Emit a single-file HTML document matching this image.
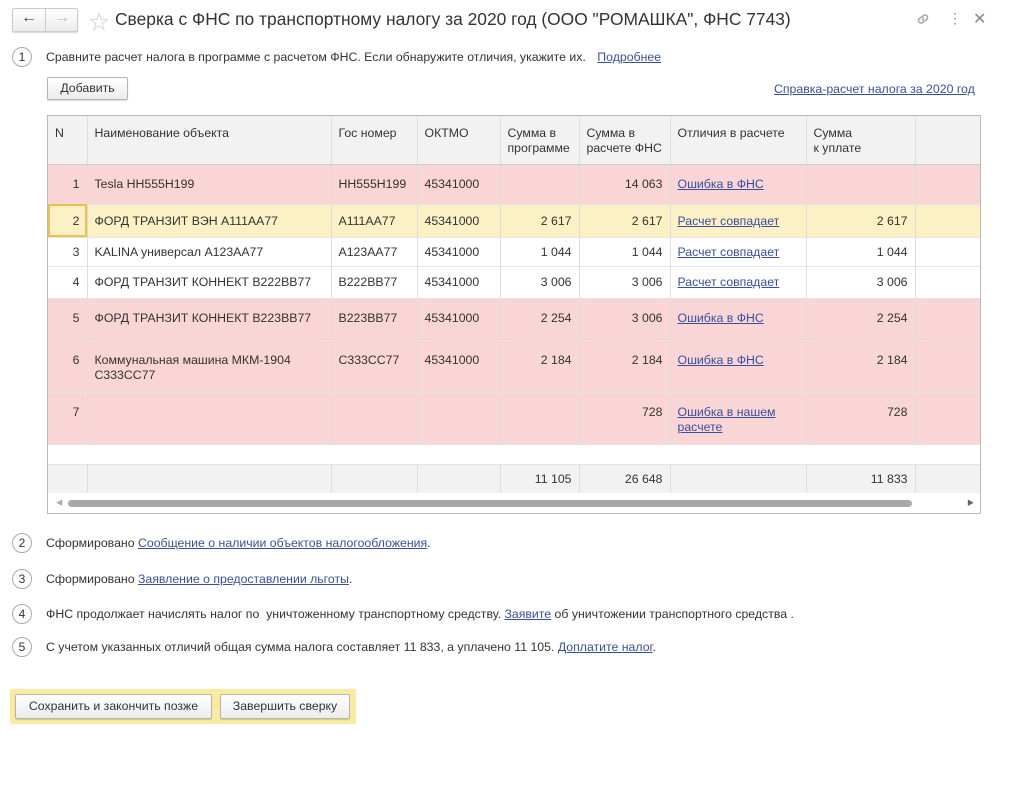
<!DOCTYPE html>
<html><head><meta charset="utf-8"><style>
*{box-sizing:border-box;margin:0;padding:0}
body{width:1024px;height:788px;background:#fff;font-family:"Liberation Sans","Noto Sans CJK SC",sans-serif;font-size:12.3px;color:#333;position:relative;overflow:hidden}
.a{position:absolute}
.l{color:#3a4ea0;text-decoration:underline}
.circ{position:absolute;width:20px;height:20px;border:1px solid #aaa;border-radius:50%;text-align:center;line-height:18px;font-size:12px;color:#333;background:#fff}
.btn{position:absolute;border:1px solid #b5b5b5;border-radius:2px;background:linear-gradient(#fff,#ececec);box-shadow:0 1px 1px rgba(0,0,0,.15);text-align:center;font-size:12.3px;color:#333}
table{border-collapse:collapse;table-layout:fixed;position:absolute;left:48px;top:116px;width:932px}
td{border-left:1px solid #ddd;border-bottom:1px solid #e4e4e4;vertical-align:top;padding:12px 7px 0;line-height:15px;overflow:hidden;white-space:nowrap}
td.w{white-space:normal}
td:first-child{border-left:none}
tr.h td{background:#f2f2f2;height:48px;padding-top:10px;border-bottom:1px solid #ccc}
.r{text-align:right}
.pk td{background:#fad5d5}
.yl td{background:#fcf0c5}
.ft td{background:#f2f2f2}
</style></head><body>
<div class="btn" style="left:12px;top:8px;width:66px;height:24px;border-color:#ccc"></div>
<div class="a" style="left:45px;top:8px;width:1px;height:24px;background:#ccc"></div>
<div class="a" style="left:21px;top:9px;font-size:16px;color:#444">&#8592;</div>
<div class="a" style="left:54px;top:9px;font-size:16px;color:#bbb">&#8594;</div>
<div class="a" style="left:89px;top:6px;font-size:20px;color:#ccc">&#9734;</div>
<div class="a" style="left:115px;top:9px;font-size:17.4px;color:#333">Сверка с ФНС по транспортному налогу за 2020 год (ООО "РОМАШКА", ФНС 7743)</div>
<svg class="a" style="left:915px;top:11px" width="16" height="16" viewBox="0 0 16 16" fill="none" stroke="#aaa" stroke-width="1.6"><path d="M7 9l2-2M6 6L4 8a2.5 2.5 0 003.5 3.5l2-2M10 10l2-2A2.5 2.5 0 008.5 4.5l-2 2"/></svg>
<div class="a" style="left:948px;top:10px;font-size:14px;color:#888">&#8942;</div>
<div class="a" style="left:973px;top:9px;font-size:16px;color:#888">&#10005;</div>

<div class="circ" style="left:12px;top:47px">1</div>
<div class="a" style="left:46px;top:50px">Сравните расчет налога в программе с расчетом ФНС. Если обнаружите отличия, укажите их. <span class="l" style="margin-left:8px">Подробнее</span></div>
<div class="btn" style="left:47px;top:77px;width:81px;height:23px;line-height:21px">Добавить</div>
<div class="a l" style="left:774px;top:82px">Справка-расчет налога за 2020 год</div>

<div class="a" style="left:47px;top:115px;width:934px;height:399px;border:1px solid #b8b8b8"></div>
<table>
<colgroup><col style="width:39px"><col style="width:244px"><col style="width:86px"><col style="width:83px"><col style="width:79px"><col style="width:91px"><col style="width:136px"><col style="width:109px"><col style="width:65px"></colgroup>
<tr class="h"><td>N</td><td>Наименование объекта</td><td>Гос номер</td><td>ОКТМО</td><td>Сумма в<br>программе</td><td>Сумма в<br>расчете ФНС</td><td>Отличия в расчете</td><td>Сумма<br>к уплате</td><td></td></tr>
<tr class="pk" style="height:40px"><td class="r">1</td><td>Tesla НН555Н199</td><td>НН555Н199</td><td>45341000</td><td></td><td class="r">14 063</td><td><span class="l">Ошибка в ФНС</span></td><td></td><td></td></tr>
<tr class="yl" style="height:33px"><td class="r" style="padding-top:9px;outline:2px solid #e8c24a;outline-offset:-2px">2</td><td style="padding-top:9px">ФОРД ТРАНЗИТ ВЭН А111АА77</td><td style="padding-top:9px">А111АА77</td><td style="padding-top:9px">45341000</td><td class="r" style="padding-top:9px">2 617</td><td class="r" style="padding-top:9px">2 617</td><td style="padding-top:9px"><span class="l">Расчет совпадает</span></td><td class="r" style="padding-top:9px">2 617</td><td></td></tr>
<tr style="height:29px"><td class="r" style="padding-top:7px">3</td><td style="padding-top:7px">KALINA универсал А123АА77</td><td style="padding-top:7px">А123АА77</td><td style="padding-top:7px">45341000</td><td class="r" style="padding-top:7px">1 044</td><td class="r" style="padding-top:7px">1 044</td><td style="padding-top:7px"><span class="l">Расчет совпадает</span></td><td class="r" style="padding-top:7px">1 044</td><td></td></tr>
<tr style="height:32px"><td class="r" style="padding-top:8px">4</td><td style="padding-top:8px">ФОРД ТРАНЗИТ КОННЕКТ В222ВВ77</td><td style="padding-top:8px">В222ВВ77</td><td style="padding-top:8px">45341000</td><td class="r" style="padding-top:8px">3 006</td><td class="r" style="padding-top:8px">3 006</td><td style="padding-top:8px"><span class="l">Расчет совпадает</span></td><td class="r" style="padding-top:8px">3 006</td><td></td></tr>
<tr class="pk" style="height:42px"><td class="r">5</td><td>ФОРД ТРАНЗИТ КОННЕКТ В223ВВ77</td><td>В223ВВ77</td><td>45341000</td><td class="r">2 254</td><td class="r">3 006</td><td><span class="l">Ошибка в ФНС</span></td><td class="r">2 254</td><td></td></tr>
<tr class="pk" style="height:52px"><td class="r">6</td><td class="w">Коммунальная машина МКМ-1904 С333СС77</td><td>С333СС77</td><td>45341000</td><td class="r">2 184</td><td class="r">2 184</td><td><span class="l">Ошибка в ФНС</span></td><td class="r">2 184</td><td></td></tr>
<tr class="pk" style="height:52px"><td class="r">7</td><td></td><td></td><td></td><td></td><td class="r">728</td><td class="w"><span class="l">Ошибка в нашем расчете</span></td><td class="r">728</td><td></td></tr>
<tr style="height:20px"><td style="border-left:none"></td><td style="border-left:none"></td><td style="border-left:none"></td><td style="border-left:none"></td><td style="border-left:none"></td><td style="border-left:none"></td><td style="border-left:none"></td><td style="border-left:none"></td><td style="border-left:none"></td></tr>
<tr class="ft" style="height:29px"><td></td><td></td><td></td><td></td><td class="r" style="padding-top:7px">11 105</td><td class="r" style="padding-top:7px">26 648</td><td></td><td class="r" style="padding-top:7px">11 833</td><td></td></tr>
</table>
<div class="a" style="left:48px;top:493px;width:932px;height:20px;background:#fff"></div>
<div class="a" style="left:68px;top:500px;width:844px;height:7px;border-radius:4px;background:#a8a8a8"></div>
<div class="a" style="left:56px;top:498px;font-size:7px;color:#aaa">&#9664;</div>
<div class="a" style="left:967px;top:498px;font-size:7px;color:#666">&#9654;</div>

<div class="circ" style="left:12px;top:533px">2</div>
<div class="a" style="left:46px;top:536px">Сформировано <span class="l">Сообщение о наличии объектов налогообложения</span>.</div>
<div class="circ" style="left:12px;top:569px">3</div>
<div class="a" style="left:46px;top:572px">Сформировано <span class="l">Заявление о предоставлении льготы</span>.</div>
<div class="circ" style="left:12px;top:604px">4</div>
<div class="a" style="left:46px;top:607px">ФНС продолжает начислять налог по&nbsp; уничтоженному транспортному средству. <span class="l">Заявите</span> об уничтожении транспортного средства .</div>
<div class="circ" style="left:12px;top:637px">5</div>
<div class="a" style="left:46px;top:640px">С учетом указанных отличий общая сумма налога составляет 11 833, а уплачено 11 105. <span class="l">Доплатите налог</span>.</div>

<div class="a" style="left:10px;top:689px;width:346px;height:35px;background:#fbeaa0;border-radius:2px"></div>
<div class="btn" style="left:15px;top:694px;width:197px;height:25px;line-height:23px">Сохранить и закончить позже</div>
<div class="btn" style="left:220px;top:694px;width:130px;height:25px;line-height:23px">Завершить сверку</div>
</body></html>
